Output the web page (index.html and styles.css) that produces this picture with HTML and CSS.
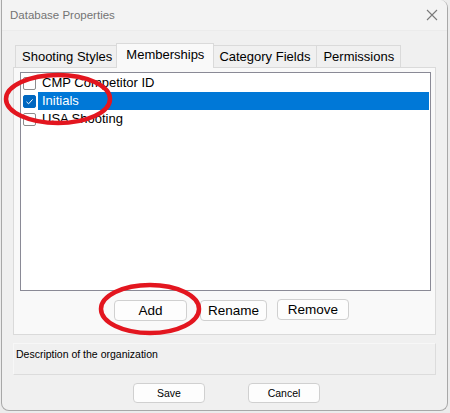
FILE: index.html
```html
<!DOCTYPE html>
<html lang="en">

<head>
  <meta charset="UTF-8">
  <meta name="viewport" content="width=device-width, initial-scale=1.0">
  <title>Database Properties</title>
  <link rel="stylesheet" href="styles.css">
</head>

<body>
  <div class="window">
    <div class="titlebar">
      <span class="title">Database Properties</span>
      <svg class="close" width="12" height="12" viewBox="0 0 12 12">
        <path d="M1 1 L11 11 M11 1 L1 11" stroke="#7a7a7a" stroke-width="1.1" fill="none" />
      </svg>
    </div>

    <div class="content">
      <div class="tabs">
        <div class="tab">Shooting Styles</div>
        <div class="tab active">Memberships</div>
        <div class="tab">Category Fields</div>
        <div class="tab">Permissions</div>
      </div>

      <div class="panel">
        <ul class="list">
          <li class="item">
            <span class="check"></span>
            <span class="label">CMP Competitor ID</span>
          </li>
          <li class="item selected">
            <span class="check checked">
              <svg width="11" height="11" viewBox="0 0 11 11">
                <path d="M2.5 5.8 L4.6 7.8 L8.6 3.4" stroke="#fff" stroke-width="1" fill="none" />
              </svg>
            </span>
            <span class="label">Initials</span>
          </li>
          <li class="item">
            <span class="check"></span>
            <span class="label">USA Shooting</span>
          </li>
        </ul>

        <div class="list-buttons">
          <button type="button" class="btn add">Add</button>
          <button type="button" class="btn rename">Rename</button>
          <button type="button" class="btn remove">Remove</button>
        </div>
      </div>

      <div class="description">Description of the organization</div>

      <div class="footer">
        <button type="button" class="btn small">Save</button>
        <button type="button" class="btn small">Cancel</button>
      </div>
    </div>
  </div>

  <!-- red marks drawn over the screenshot -->
  <svg class="marks" width="450" height="413" viewBox="0 0 450 413">
    <ellipse cx="58" cy="99" rx="52" ry="24" stroke="#e3161f" stroke-width="4.5" fill="none" />
    <ellipse cx="150" cy="309" rx="49" ry="24" stroke="#e3161f" stroke-width="4.5" fill="none" />
  </svg>
</body>

</html>
```

FILE: styles.css
```css
* {
  box-sizing: border-box;
}

body {
  margin: 0;
  background: #ececec;
  font-family: "Liberation Sans", Arial, sans-serif;
  color: #000;
}

.window {
  margin-left: 1px;
  width: 447px;
  height: 411px;
  background: #f0f0f0;
  border: 1px solid #a8a8a8;
  border-top: none;
  border-radius: 0 8px 8px 8px;
  overflow: hidden;
}

.titlebar {
  height: 31px;
  background: #f3f3f3;
  border-bottom: 1px solid #ebebeb;
  display: flex;
  align-items: center;
  justify-content: space-between;
  padding: 0 9px 0 8px;
}

.title {
  font-size: 11.5px;
  color: #737373;
}

.close {
  display: block;
}

.content {
  padding: 0 11px 0 11px;
}

/* tabs */
.tabs {
  display: flex;
  align-items: flex-end;
  margin-top: 12px;
  padding-left: 2px;
  height: 24px;
  position: relative;
  z-index: 1;
}

.tab {
  height: 22px;
  padding: 0 6px;
  font-size: 13px;
  line-height: 21px;
  background: #f0f0f0;
  border: 1px solid #dadada;
  border-bottom: none;
  margin-right: -1px;
}

.tab.active {
  height: 25px;
  margin: 0 -2px -1px -2px;
  padding: 0 9px;
  line-height: 22px;
  background: #f9f9f9;
  position: relative;
  z-index: 2;
}

.panel {
  height: 268px;
  background: #f9f9f9;
  border: 1px solid #dadada;
  padding: 4px 4px 0 6px;
}

/* list box */
.list {
  margin: 0;
  padding: 1px 1px 0 1px;
  list-style: none;
  height: 219px;
  background: #fff;
  border: 1px solid #8a8a96;
}

.item {
  display: flex;
  align-items: center;
  height: 18px;
  font-size: 13px;
}

.check {
  width: 13px;
  height: 13px;
  margin: 0 2px 0 1px;
  border: 1px solid #8c8c8c;
  border-radius: 2px;
  background: #fff;
  display: flex;
  align-items: center;
  justify-content: center;
}

.check.checked {
  background: #0067c0;
  border-color: #0067c0;
}

.label {
  flex: 1;
  height: 18px;
  line-height: 18px;
  padding-left: 4px;
}

.selected .label {
  background: #0078d7;
  color: #fff;
}

.list-buttons {
  display: flex;
  margin: 9px 0 0 94px;
}

.btn {
  height: 21px;
  padding: 0;
  font-family: inherit;
  font-size: 13.5px;
  color: #000;
  background: #fdfdfd;
  border: 1px solid #d0d0d0;
  border-radius: 4px;
}

.add {
  width: 73px;
}

.rename {
  width: 67px;
  margin-left: 13px;
}

.remove {
  width: 72px;
  margin-left: 10px;
  position: relative;
  top: -1px;
}

.description {
  margin-top: 8px;
  height: 32px;
  border: 1px solid #dcdcdc;
  border-top-color: #f7f7f7;
  border-left-color: #f7f7f7;
  font-size: 10.5px;
  padding: 4px 2px;
}

.footer {
  display: flex;
  justify-content: center;
  gap: 43px;
  margin-top: 8px;
  padding-left: 4px;
}

.btn.small {
  width: 72px;
  height: 20px;
  font-size: 10.5px;
}

.marks {
  position: absolute;
  left: 0;
  top: 0;
  pointer-events: none;
}
```
